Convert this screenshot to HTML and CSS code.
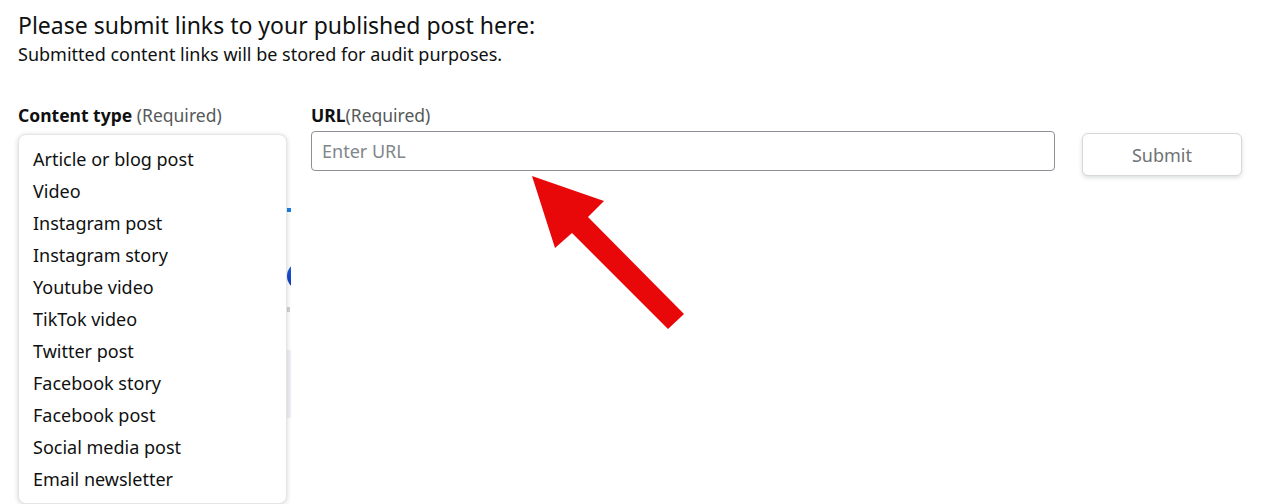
FILE: index.html
```html
<!DOCTYPE html>
<html lang="en">
<head>
<meta charset="utf-8">
<title>Submit links</title>
<link rel="stylesheet" href="styles.css">
</head>
<body>
<div class="page">
  <h1 class="title">Please submit links to your published post here:</h1>
  <p class="sub">Submitted content links will be stored for audit purposes.</p>

  <div class="form">
    <div class="field field-type">
      <div class="label"><b>Content type</b> <span class="req">(Required)</span></div>
      <div class="select-slot"></div>
      <ul class="menu">
        <li>Article or blog post</li>
        <li>Video</li>
        <li>Instagram post</li>
        <li>Instagram story</li>
        <li>Youtube video</li>
        <li>TikTok video</li>
        <li>Twitter post</li>
        <li>Facebook story</li>
        <li>Facebook post</li>
        <li>Social media post</li>
        <li>Email newsletter</li>
      </ul>
    </div>
    <div class="field field-url">
      <div class="label"><b>URL</b><span class="req">(Required)</span></div>
      <input class="input" type="text" placeholder="Enter URL">
    </div>
    <button class="submit" type="button">Submit</button>
  </div>

  <div class="under">
    <div class="under-bar"></div>
    <div class="under-dot"></div>
    <div class="under-text"></div>
    <div class="under-panel"></div>
  </div>
</div>

<svg class="arrow" width="1264" height="504" viewBox="0 0 1264 504" aria-hidden="true">
  <polygon points="532,176 604,201 588,217 684,314 668,329 572,233 555,248" fill="#e8080a"/>
</svg>
</body>
</html>
```

FILE: styles.css
```css
html, body {
  margin: 0;
  padding: 0;
  background: #ffffff;
  height: 504px;
  overflow: hidden;
}

body {
  font-family: "Noto Sans", "Open Sans", Arial, sans-serif;
  color: #0f1111;
}

.page {
  padding: 9px 18px 0;
}

.title {
  margin: 0;
  font-size: 23px;
  line-height: 32px;
  font-weight: 400;
}

.sub {
  margin: 1px 0 0;
  font-size: 18px;
  line-height: 24px;
}

.form {
  display: flex;
  align-items: flex-start;
  margin-top: 37px;
}

.field {
  display: flex;
  flex-direction: column;
}

.field-type {
  position: relative;
  width: 269px;
  margin-right: 24px;
}

.field-url {
  width: 744px;
  margin-right: 27px;
}

.label {
  font-size: 17.5px;
  line-height: 24px;
  height: 24px;
  margin-bottom: 4px;
  white-space: nowrap;
}

.label b {
  font-weight: 700;
}

.req {
  color: #565959;
}

.select-slot {
  height: 40px;
}

.input {
  box-sizing: border-box;
  height: 40px;
  width: 100%;
  margin: 0;
  border: 1px solid #8d9096;
  border-radius: 4px;
  padding: 0 10px;
  font-family: inherit;
  font-size: 18px;
  color: #0f1111;
  outline: none;
}

.input::placeholder {
  color: #80868a;
}

.submit {
  box-sizing: border-box;
  width: 160px;
  height: 43px;
  margin-top: 30px;
  border: 1px solid #d5d9d9;
  border-radius: 6px;
  background: #ffffff;
  box-shadow: 0 2px 4px rgba(180, 185, 185, 0.45);
  font-family: inherit;
  font-size: 18px;
  color: #6f7373;
}

.menu {
  position: absolute;
  top: 31px;
  left: 0;
  z-index: 5;
  box-sizing: border-box;
  width: 269px;
  margin: 0;
  padding: 8px 0 8px;
  list-style: none;
  background: #ffffff;
  border: 1px solid #e3e6e6;
  border-radius: 8px;
  box-shadow: 0 1px 5px rgba(15, 17, 17, 0.18);
}

.menu li {
  padding: 0 14px;
  font-size: 18px;
  line-height: 32px;
  height: 32px;
  color: #0f1111;
  white-space: nowrap;
}

.under {
  position: relative;
  width: 4px;
  margin-left: 269px;
  margin-top: 32px;
  overflow: hidden;
}

.under-bar {
  height: 4px;
  background: #1a7de6;
}

.under-dot {
  width: 28px;
  height: 28px;
  margin-top: 50px;
  border-radius: 50%;
  background: linear-gradient(180deg, #1866e0, #0f2fb8);
}

.under-text {
  margin-top: 17px;
  height: 5px;
  width: 3px;
  background: #d0d3d3;
}

.under-panel {
  margin-top: 38px;
  height: 68px;
  background: #eef0f5;
}

.arrow {
  position: absolute;
  left: 0;
  top: 0;
  z-index: 10;
  pointer-events: none;
}
```
